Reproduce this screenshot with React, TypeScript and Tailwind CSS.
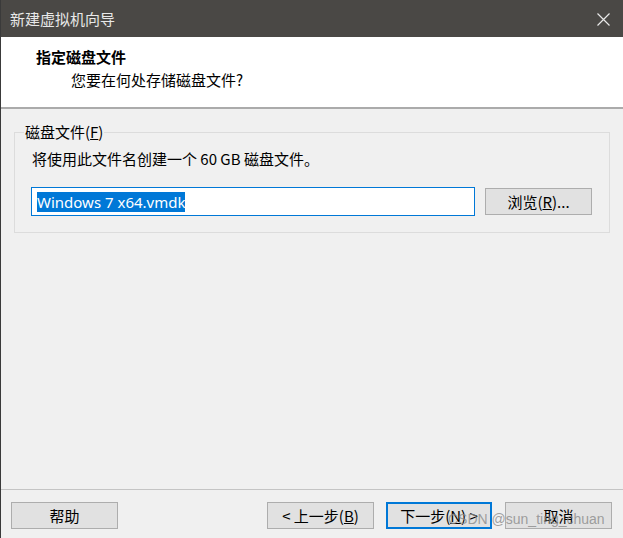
import React from 'react';

const cjk = { fontFamily: '"Noto Sans CJK SC", "Microsoft YaHei", sans-serif' };

const DlgButton = ({ children, primary = false }: { children: React.ReactNode; primary?: boolean }) => (
  <div
    className={
      primary
        ? 'flex h-[27px] w-[106px] items-center justify-center border-2 border-[#0078d7] bg-[#e1e1e1] text-[15px] leading-[20px] text-black'
        : 'flex h-[27px] w-[107px] items-center justify-center border border-[#adadad] bg-[#e1e1e1] text-[15px] leading-[20px] text-black'
    }
  >
    {children}
  </div>
);

export default function App() {
  return (
    <div className="relative flex h-[538px] w-[623px] flex-col overflow-hidden border-l border-[#3a3a3a] bg-[#f0f0f0]" style={cjk}>
      {/* title bar */}
      <div className="flex h-[37px] shrink-0 items-center justify-between bg-[#4a4845] pl-[9px] pr-[13px]">
        <span className="text-[15px] leading-[20px] text-[#e8e8e8]">新建虚拟机向导</span>
        <svg width="13" height="13" viewBox="0 0 13 13" className="mt-[1px]">
          <path d="M0.5 0.5 L12.5 12.5 M12.5 0.5 L0.5 12.5" stroke="#e8e8e8" strokeWidth="1.2" />
        </svg>
      </div>

      {/* header */}
      <div className="flex h-[72px] shrink-0 flex-col border-b-2 border-[#ababab] bg-white pl-[35px] pt-[10px]">
        <div className="text-[15px] font-bold leading-[20px] text-black">指定磁盘文件</div>
        <div className="ml-[35px] mt-[3px] text-[15px] leading-[20px] text-black">您要在何处存储磁盘文件?</div>
      </div>

      {/* body */}
      <div className="flex flex-1 flex-col">
        <fieldset className="mx-[13px] mt-[13px] border border-[#dcdcdc]">
          <legend className="ml-[9px] px-[1px] text-[15px] leading-[20px] text-black">
            磁盘文件(<span className="underline">F</span>)
          </legend>
          <div className="flex flex-col pb-[16px] pl-[16px]">
            <div className="mt-[7px] pl-[1px] text-[15px] leading-[20px] text-black">将使用此文件名创建一个 60 GB 磁盘文件。</div>
            <div className="mt-[18px] flex items-center gap-[10px]">
              <div className="flex h-[29px] w-[444px] items-center border border-[#0078d7] bg-white pl-[5px]">
                <span
                  className="bg-[#0078d7] text-[15px] leading-[20px] text-white"
                  style={{ fontFamily: '"Segoe UI", "Noto Sans", "Liberation Sans", sans-serif' }}
                >
                  Windows 7 x64.vmdk
                </span>
              </div>
              <DlgButton>
                浏览(<span className="underline">R</span>)...
              </DlgButton>
            </div>
          </div>
        </fieldset>
      </div>

      {/* footer */}
      <div className="flex h-[49px] shrink-0 items-start border-t border-[#c4c4c4] pl-[10px] pr-[11px] pt-[12px]">
        <DlgButton>帮助</DlgButton>
        <div className="ml-auto flex gap-[12px]">
          <DlgButton>
            &lt; 上一步(<span className="underline">B</span>)
          </DlgButton>
          <DlgButton primary>
            下一步(<span className="underline">N</span>) &gt;
          </DlgButton>
          <div className="ml-[1px]">
            <DlgButton>取消</DlgButton>
          </div>
        </div>
      </div>

      {/* watermark */}
      <div
        className="pointer-events-none absolute left-[447px] top-[510px] text-[14px] leading-[18px] text-[#8a8a8a]/80"
        style={{ fontFamily: '"Liberation Sans", Arial, sans-serif' }}
      >
        CSDN @sun_ting_chuan
      </div>
    </div>
  );
}
